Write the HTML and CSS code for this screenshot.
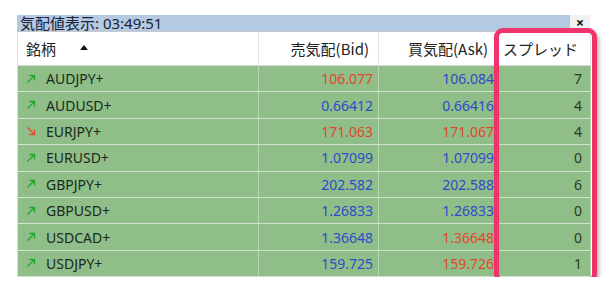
FILE: index.html
```html
<!DOCTYPE html>
<html lang="ja">
<head>
    <meta charset="UTF-8">
    <title>気配値表示</title>
    <link rel="stylesheet" href="styles.css">
</head>
<body>
    <div class="window">
        <div class="titlebar">
            <div class="title">気配値表示: 03:49:51</div>
            <div class="close">×</div>
        </div>
        <div class="quotes">
            <div class="head sym">銘柄 <span class="sort"></span></div>
            <div class="head num">売気配(Bid)</div>
            <div class="head num">買気配(Ask)</div>
            <div class="head num spread">スプレッド</div>

            <div class="cell sym"><svg class="arrow up" viewBox="0 0 10 10"><path d="M1.5 8.5 L8.5 1.5 M3.5 1.5 H8.5 V6.5"/></svg>AUDJPY+</div>
            <div class="cell num red">106.077</div>
            <div class="cell num blue ask">106.084</div>
            <div class="cell num spread">7</div>

            <div class="cell sym"><svg class="arrow up" viewBox="0 0 10 10"><path d="M1.5 8.5 L8.5 1.5 M3.5 1.5 H8.5 V6.5"/></svg>AUDUSD+</div>
            <div class="cell num blue">0.66412</div>
            <div class="cell num blue ask">0.66416</div>
            <div class="cell num spread">4</div>

            <div class="cell sym"><svg class="arrow down" viewBox="0 0 10 10"><path d="M1.5 1.5 L8.5 8.5 M3.5 8.5 H8.5 V3.5"/></svg>EURJPY+</div>
            <div class="cell num red">171.063</div>
            <div class="cell num red ask">171.067</div>
            <div class="cell num spread">4</div>

            <div class="cell sym"><svg class="arrow up" viewBox="0 0 10 10"><path d="M1.5 8.5 L8.5 1.5 M3.5 1.5 H8.5 V6.5"/></svg>EURUSD+</div>
            <div class="cell num blue">1.07099</div>
            <div class="cell num blue ask">1.07099</div>
            <div class="cell num spread">0</div>

            <div class="cell sym"><svg class="arrow up" viewBox="0 0 10 10"><path d="M1.5 8.5 L8.5 1.5 M3.5 1.5 H8.5 V6.5"/></svg>GBPJPY+</div>
            <div class="cell num blue">202.582</div>
            <div class="cell num blue ask">202.588</div>
            <div class="cell num spread">6</div>

            <div class="cell sym"><svg class="arrow up" viewBox="0 0 10 10"><path d="M1.5 8.5 L8.5 1.5 M3.5 1.5 H8.5 V6.5"/></svg>GBPUSD+</div>
            <div class="cell num blue">1.26833</div>
            <div class="cell num blue ask">1.26833</div>
            <div class="cell num spread">0</div>

            <div class="cell sym"><svg class="arrow up" viewBox="0 0 10 10"><path d="M1.5 8.5 L8.5 1.5 M3.5 1.5 H8.5 V6.5"/></svg>USDCAD+</div>
            <div class="cell num blue">1.36648</div>
            <div class="cell num red ask">1.36648</div>
            <div class="cell num spread">0</div>

            <div class="cell sym"><svg class="arrow up" viewBox="0 0 10 10"><path d="M1.5 8.5 L8.5 1.5 M3.5 1.5 H8.5 V6.5"/></svg>USDJPY+</div>
            <div class="cell num blue">159.725</div>
            <div class="cell num red ask">159.726</div>
            <div class="cell num spread">1</div>
        </div>
        <div class="highlight"></div>
    </div>
</body>
</html>
```
FILE: styles.css
```css
* {
    margin: 0;
    padding: 0;
    box-sizing: border-box;
}

body {
    background: #fff;
    padding: 15px 0 0 17px;
    font-family: "Noto Sans", "Noto Sans CJK JP", sans-serif;
    font-size: 14px;
    color: #1e2a1e;
}

.window {
    position: relative;
    width: 573px;
}

.titlebar {
    display: flex;
    height: 17px;
    border-bottom: 1px solid #c9c9c9;
}

.title {
    flex: 1;
    background: #b4c9e2;
    color: #1a2233;
    font-size: 15px;
    line-height: 17px;
    padding-left: 3px;
    white-space: nowrap;
}

.close {
    width: 20px;
    background: #f2f2f2;
    font-weight: bold;
    font-size: 14px;
    line-height: 16px;
    text-align: center;
    color: #111;
}

.quotes {
    display: grid;
    grid-template-columns: 241px 120px 119px 93px;
    border-left: 1px solid #dcdcdc;
}

.head {
    height: 34px;
    background: #fff;
    border-right: 1px solid #e3e3e3;
    border-bottom: 1px solid #d6d6d6;
    display: flex;
    align-items: center;
    font-family: "Noto Sans CJK JP", sans-serif;
    font-size: 15px;
    color: #222;
}

.head.num {
    justify-content: flex-end;
    padding-right: 9px;
}

.head.spread {
    padding-right: 12px;
}

.head.sym {
    padding-left: 8px;
}

.sort {
    display: inline-block;
    margin-left: 24px;
    margin-top: -3px;
    border-left: 4.5px solid transparent;
    border-right: 4.5px solid transparent;
    border-bottom: 5px solid #111;
}

.cell {
    height: 26.4px;
    background: #8fbe89;
    border-right: 1px solid #b9d6b4;
    border-bottom: 1.4px solid #cfe2cb;
    display: flex;
    align-items: center;
}

.cell.sym {
    padding-left: 8px;
    color: #1b2a1b;
}

.cell.num {
    justify-content: flex-end;
    padding-right: 5px;
}

.cell.ask {
    padding-right: 3px;
}

.cell.spread {
    padding-right: 8px;
    color: #2a3a22;
}

.red {
    color: #e2472a;
}

.blue {
    color: #2e4bc8;
}

.arrow {
    width: 10px;
    height: 10px;
    margin-right: 10px;
    fill: none;
    stroke-width: 1.3;
}

.arrow.up {
    stroke: #1fa52a;
}

.arrow.down {
    stroke: #e4472f;
}

.highlight {
    position: absolute;
    left: 477px;
    top: 13px;
    width: 103px;
    height: 255px;
    border: 5px solid #f1336c;
    border-radius: 9px;
    box-shadow: 2px 3px 4px rgba(0, 0, 0, 0.3);
}
```
